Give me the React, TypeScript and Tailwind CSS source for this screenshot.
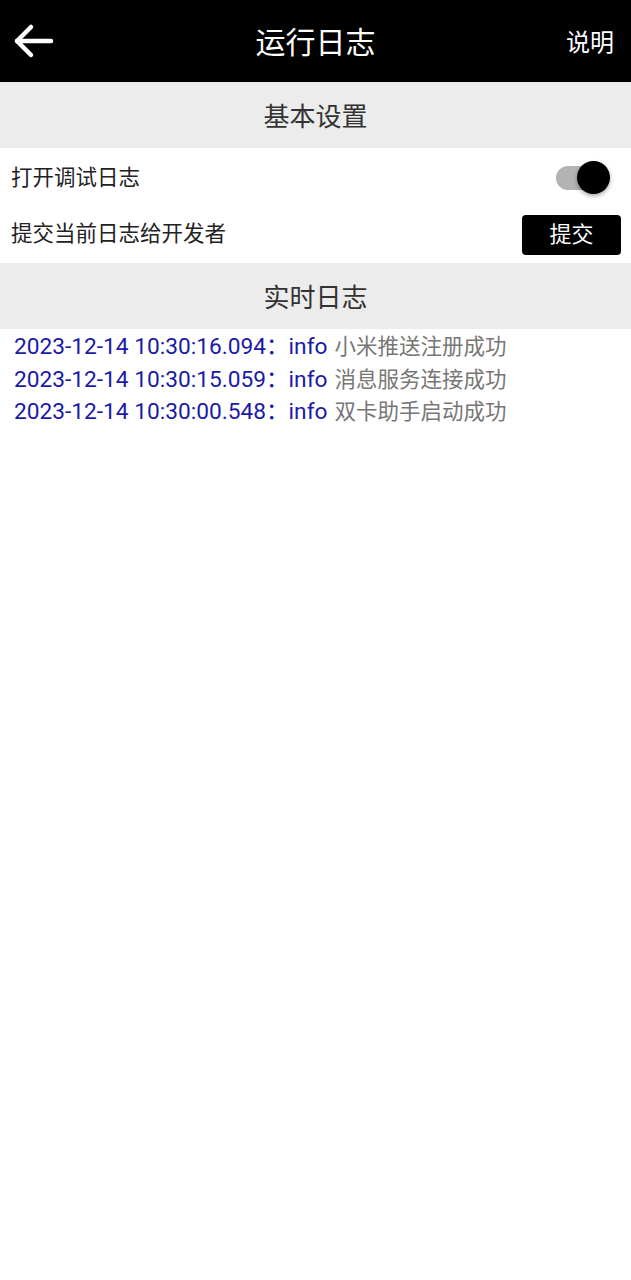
const logs = [
  { time: '2023-12-14 10:30:16.094', msg: '小米推送注册成功' },
  { time: '2023-12-14 10:30:15.059', msg: '消息服务连接成功' },
  { time: '2023-12-14 10:30:00.548', msg: '双卡助手启动成功' },
];

const font = { fontFamily: 'Roboto, "Noto Sans CJK SC", sans-serif' };

export default function App() {
  return (
    <div className="min-h-[1280px] bg-white" style={font}>
      <div className="h-[82px] bg-black flex items-center justify-between px-[12px] relative">
        <svg width="42" height="36" viewBox="0 0 42 36" fill="none" stroke="white" strokeWidth="4.5" strokeLinecap="round" strokeLinejoin="round">
          <path d="M39 18H5" />
          <path d="M19 4L5 18l14 14" />
        </svg>
        <div className="absolute left-0 right-0 text-center text-white text-[30px] pt-[3px] pointer-events-none">运行日志</div>
        <span className="text-white text-[24px] pr-[5px] pt-[3px]">说明</span>
      </div>

      <div className="h-[66px] bg-[#ececec] flex items-center justify-center text-[26px] text-[#333] pt-[4px]">基本设置</div>

      <div className="h-[58px] flex items-center justify-between pl-[11px] pr-[29px] mt-[1px]">
        <span className="text-[21.5px] text-[#222]">打开调试日志</span>
        <div className="relative w-[46px] h-[26px]">
          <div className="absolute left-0 right-[2px] top-[1px] h-[24px] rounded-full bg-[#b3b3b3]" />
          <div className="absolute right-[-8px] top-[-4px] w-[33px] h-[33px] rounded-full bg-black shadow-[0_2px_4px_rgba(0,0,0,0.35)]" />
        </div>
      </div>

      <div className="h-[55px] flex items-center justify-between pl-[11px] pr-[10px]">
        <span className="text-[21.5px] text-[#222]">提交当前日志给开发者</span>
        <button className="w-[99px] h-[40px] bg-black rounded-[4px] text-white text-[22px]">提交</button>
      </div>

      <div className="h-[66px] bg-[#ececec] flex items-center justify-center text-[26px] text-[#333] mt-[1px] pt-[4px]">实时日志</div>

      <div className="pt-[2px] pl-[14px]">
        {logs.map((l) => (
          <div key={l.time} className="h-[32.5px] flex items-center whitespace-nowrap">
            <span className="text-[#1a1aa8] text-[22.7px]">{l.time}：info</span>
            <span className="text-[#777] text-[21.5px] ml-[7px]">{l.msg}</span>
          </div>
        ))}
      </div>
    </div>
  );
}
